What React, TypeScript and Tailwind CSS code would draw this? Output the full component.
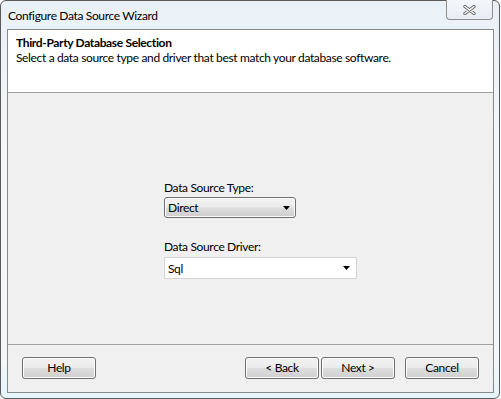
const font = "font-['Lato','Liberation_Sans',sans-serif] tracking-[-0.35px]";

const Arrow = () => (
  <svg width="7" height="4" viewBox="0 0 7 4">
    <path d="M0 0h7L3.5 4z" fill="#000" />
  </svg>
);

const Button = ({ label, className = "" }: { label: string; className?: string }) => (
  <button
    className={`w-[74px] h-[22px] rounded-[3px] border border-[#707070] bg-[linear-gradient(#f2f2f2_0%,#ebebeb_48%,#dddddd_52%,#cfcfcf_100%)] shadow-[inset_0_0_0_1px_#fcfcfc] text-[12px] text-black leading-none ${className}`}
  >
    {label}
  </button>
);

const App = () => {
  return (
    <div className={`w-[501px] h-[399px] bg-white text-black ${font}`}>
      <div className="w-[500px] h-[399px] rounded-[6px] border border-[#5a5a5a] bg-[linear-gradient(#e9f1f7,#f5f8fa_40%,#f3f7fa_90%,#e3f6fc)] flex flex-col pl-[6px] pr-[5px] pb-[5px]">
        {/* Title bar */}
        <div className="h-[28px] flex items-start">
          <div className="pt-[7px] pl-[1px] text-[12px] leading-[15px] flex-1">Configure Data Source Wizard</div>
          <div className="mt-[-1px] w-[47px] h-[20px] rounded-b-[4px] border border-[#8d8d8d] border-t-0 bg-[linear-gradient(#f4f8fb,#e6edf3)] flex items-center justify-center mr-[1px]">
            <svg width="13" height="10" viewBox="0 0 13 10">
              <path d="M2 1.5l9 7M11 1.5l-9 7" stroke="#6d6d6d" strokeWidth="3.4" strokeLinecap="round" />
              <path d="M2 1.5l9 7M11 1.5l-9 7" stroke="#fff" strokeWidth="1.4" strokeLinecap="round" />
            </svg>
          </div>
        </div>

        {/* Client area */}
        <div className="flex-1 border border-[#8a8a8a] bg-[#f0f0f0] flex flex-col">
          <div className="h-[63px] bg-white border-b border-[#a0a0a0] px-[8px] pt-[5px] text-[12px] leading-[15px]">
            <div className="font-bold">Third-Party Database Selection</div>
            <div>Select a data source type and driver that best match your database software.</div>
          </div>

          <div className="flex-1 pl-[156px] pt-[87px] text-[12px] leading-[15px]">
            <div>Data Source Type:</div>
            <div className="mt-[2px] w-[132px] h-[21px] rounded-[3px] border border-[#707070] bg-[linear-gradient(#f2f2f2_0%,#ebebeb_48%,#dddddd_52%,#cfcfcf_100%)] shadow-[inset_0_0_0_1px_#fcfcfc] flex items-center pl-[3px] pr-[5px]">
              <span className="flex-1">Direct</span>
              <Arrow />
            </div>
            <div className="mt-[21px]">Data Source Driver:</div>
            <div className="mt-[3px] w-[193px] h-[22px] border border-[#d5d5d5] bg-white flex items-center pl-[3px] pr-[6px]">
              <span className="flex-1">Sql</span>
              <Arrow />
            </div>
          </div>

          <div className="h-[48px] border-t border-[#a0a0a0] flex items-start pt-[12px] pl-[14px] pr-[14px]">
            <Button label="Help" />
            <div className="flex-1" />
            <Button label="< Back" />
            <Button label="Next >" className="ml-[2px]" />
            <Button label="Cancel" className="ml-[10px]" />
          </div>
        </div>
      </div>
    </div>
  );
};

export default App;
